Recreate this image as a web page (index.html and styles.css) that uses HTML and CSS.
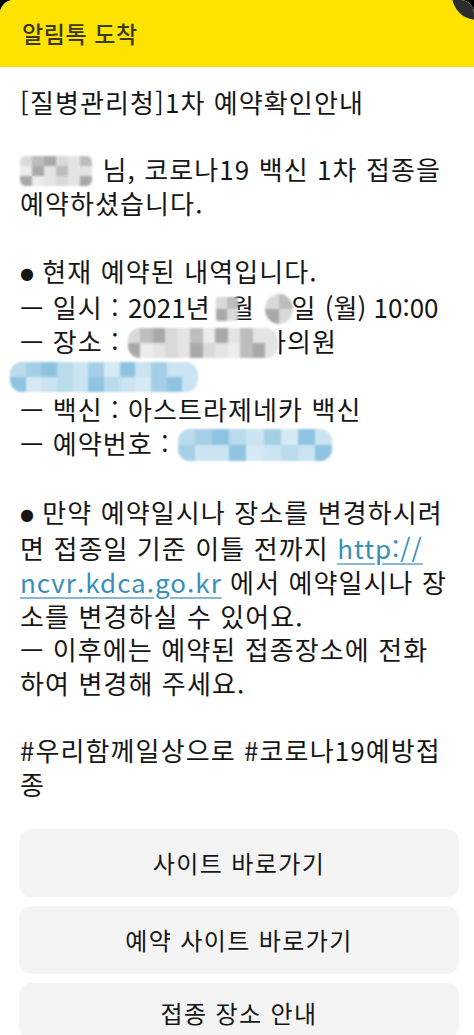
FILE: index.html
```html
<!DOCTYPE html>
<html lang="ko">
<head>
<meta charset="utf-8">
<title>알림톡 도착</title>
<link rel="stylesheet" href="styles.css">
</head>
<body>
<div class="screen">
  <header class="topbar">
    <span class="topbar-title">알림톡 도착</span>
    <span class="camera"></span>
  </header>
  <main class="message">
    <p class="para">[질병관리청]1차 예약확인안내</p>
    <p class="para"><span class="blur blur-name grey"><i></i><i></i><i></i><i></i><i></i><i></i><i></i><i></i><i></i><i></i><i></i><i></i><i></i><i></i><i></i><i></i><i></i><i></i></span> 님, 코로나19 백신 1차 접종을<br>예약하셨습니다.</p>
    <p class="para"><span class="dot">●</span> 현재 예약된 내역입니다.<br>— 일시 : <span class="tight">2021년</span> <span class="blur blur-month grey"><i></i><i></i><i></i><i></i></span>월 <span class="blur blur-day grey"><i></i><i></i><i></i><i></i></span>일 <span class="tight">(월) 10:00</span><br>— 장소 : <span class="blur blur-place grey"><i></i><i></i><i></i><i></i><i></i><i></i><i></i><i></i><i></i><i></i><i></i><i></i><i></i><i></i><i></i><i></i><i></i><i></i><i></i><i></i><i></i><i></i><i></i><i></i></span>아의원<br><span class="blur blur-addr blue"><i></i><i></i><i></i><i></i><i></i><i></i><i></i><i></i><i></i><i></i><i></i><i></i><i></i><i></i><i></i><i></i><i></i><i></i><i></i><i></i><i></i><i></i><i></i><i></i></span><br>— 백신 : 아스트라제네카 백신<br>— 예약번호 : <span class="blur blur-num blue"><i></i><i></i><i></i><i></i><i></i><i></i><i></i><i></i><i></i><i></i><i></i><i></i><i></i><i></i><i></i><i></i><i></i><i></i></span></p>
    <p class="para"><span class="dot">●</span> 만약 예약일시나 장소를 변경하시려<br>면 접종일 기준 이틀 전까지 <a class="link" href="#">http://<br>ncvr.kdca.go.kr</a> 에서 예약일시나 장<br>소를 변경하실 수 있어요.<br>— 이후에는 예약된 접종장소에 전화<br>하여 변경해 주세요.</p>
    <p class="para">#우리함께일상으로 #코로나19예방접<br>종</p>
  </main>
  <nav class="buttons">
    <a class="btn" href="#">사이트 바로가기</a>
    <a class="btn" href="#">예약 사이트 바로가기</a>
    <a class="btn btn-last" href="#">접종 장소 안내</a>
  </nav>
</div>
</body>
</html>
```

FILE: styles.css
```css
* { box-sizing: border-box; }
html, body {
  margin: 0;
  padding: 0;
  background: #000;
}
body {
  font-family: "Noto Sans CJK KR", "Noto Sans", sans-serif;
  width: 474px;
  height: 1035px;
  overflow: hidden;
}
.screen {
  background: #fff;
  height: 1035px;
  border-radius: 14px 14px 0 0;
  overflow: hidden;
  position: relative;
}
.topbar {
  height: 67px;
  background: #ffe300;
  display: flex;
  align-items: center;
  padding: 0 0 2px 22px;
  position: relative;
}
.topbar-title {
  font-size: 23px;
  letter-spacing: 0.6px;
  color: #3b381c;
  font-weight: 500;
}
.camera {
  position: absolute;
  right: -28px;
  top: -30px;
  width: 50px;
  height: 50px;
  border-radius: 50%;
  background: #2c2c2e;
}
.message {
  padding: 18px 20px 0 20px;
  font-size: 26px;
  font-weight: 400;
  letter-spacing: 1.1px;
  line-height: 33.7px;
  color: #161616;
  white-space: nowrap;
}
.para {
  margin: 0 0 33.7px 0;
}
.para:last-child { margin-bottom: 0; }
.tight { letter-spacing: 0; }
.dot {
  font-size: 16px;
  vertical-align: 3px;
  letter-spacing: 0;
  font-family: "DejaVu Sans", sans-serif;
}
.link {
  color: #3a8fba;
  text-decoration: underline;
  text-decoration-color: #86b8d1;
  text-decoration-thickness: 1.5px;
  text-underline-offset: 4px;
  letter-spacing: 1px;
}

/* blurred (masked) personal data */
.blur {
  display: inline-grid;
  vertical-align: middle;
  filter: blur(1.2px);
  border-radius: 6px;
  overflow: hidden;
  margin-top: -4px;
}
.blur i { display: block; }
.grey { background: #e4e4e4; }
.grey i:nth-child(3n+1) { background: #d9d9d9; }
.grey i:nth-child(4n+2) { background: #bdbdbd; }
.grey i:nth-child(5n+3) { background: #a9a9a9; }
.grey i:nth-child(7n) { background: #ececec; }
.blue { background: #cbe4f1; }
.blue i:nth-child(3n+1) { background: #b9dbec; }
.blue i:nth-child(4n+2) { background: #a4cfe6; }
.blue i:nth-child(5n+3) { background: #8fc4e1; }
.blue i:nth-child(7n) { background: #d6eaf4; }

.blur-name {
  width: 72px; height: 30px;
  grid-template-columns: repeat(6, 1fr);
  grid-template-rows: repeat(3, 1fr);
  margin-right: 2px;
}
.blur-month {
  width: 22px; height: 24px;
  grid-template-columns: repeat(2, 1fr);
  grid-template-rows: repeat(2, 1fr);
  margin-left: -2px;
  margin-right: -8px;
  position: relative;
  z-index: 1;
  border-radius: 2px;
}
.blur-day {
  width: 28px; height: 30px;
  grid-template-columns: repeat(2, 1fr);
  grid-template-rows: repeat(2, 1fr);
  border-radius: 50%;
  margin-left: 2px;
  margin-right: -2px;
}
.blur-place {
  width: 150px; height: 30px;
  grid-template-columns: repeat(12, 1fr);
  grid-template-rows: repeat(2, 1fr);
  margin-right: -16px;
  position: relative;
  z-index: 1;
  border-radius: 12px;
}
.blur-addr {
  width: 188px; height: 30px;
  grid-template-columns: repeat(12, 1fr);
  grid-template-rows: repeat(2, 1fr);
  margin-left: -10px;
  border-radius: 12px;
}
.blur-num {
  width: 154px; height: 32px;
  grid-template-columns: repeat(9, 1fr);
  grid-template-rows: repeat(2, 1fr);
  border-radius: 12px;
}

.buttons {
  margin: 28px 15px 0 19px;
  display: flex;
  flex-direction: column;
  gap: 9px;
}
.btn {
  height: 68px;
  border-radius: 12px;
  background: #f4f4f4;
  display: flex;
  align-items: center;
  justify-content: center;
  font-size: 24px;
  font-weight: 400;
  letter-spacing: 1.4px;
  color: #161616;
  text-decoration: none;
}
.btn-last { height: 56px; padding-top: 4px; }
```
